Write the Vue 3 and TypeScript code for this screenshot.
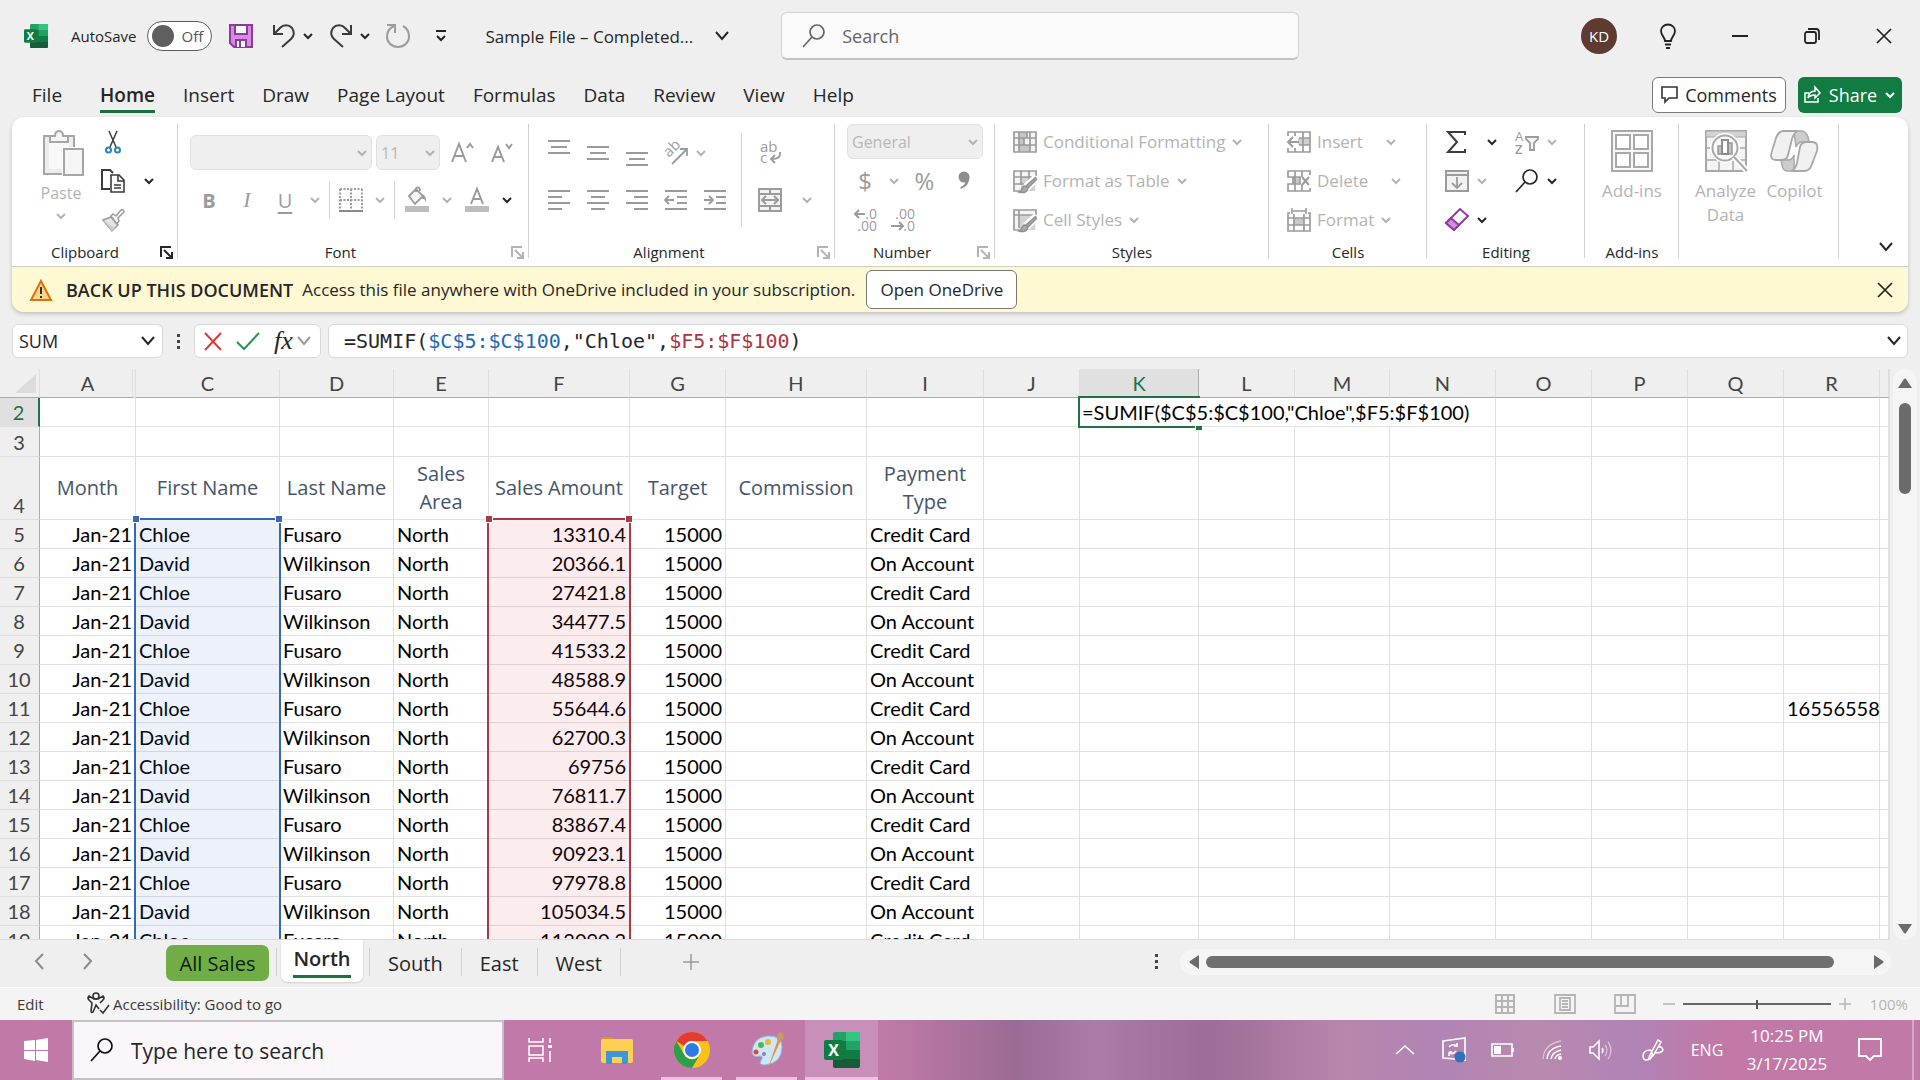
<script setup lang="ts">
import { h, ref } from 'vue'

const G = 'fill="none" stroke="#9b9b9b" stroke-width="2"'
const D = 'fill="none" stroke="#3b3b3b" stroke-width="2"'
const excel =
  '<rect x="9" y="0" width="27" height="36" rx="2" fill="#21a366"/><path d="M22 0h12a2 2 0 0 1 2 2v7H22z" fill="#33c481"/><path d="M9 18h27v16a2 2 0 0 1-2 2H11a2 2 0 0 1-2-2z" fill="#185c37"/><path d="M22 18h14v9H22zM9 9h13v18H9z" fill="#107c41"/><rect x="0" y="8" width="19" height="20" rx="2" fill="#107c41"/><text x="9.500" y="24" font-family="Open Sans, sans-serif" font-weight="700" font-size="16" fill="#fff" text-anchor="middle">X</text>'

const icons: Record<string, string> = {
  excel: '<g transform="scale(.667)">' + excel + '</g>',
  excelBig: excel,
  save: '<path d="M1 1h22v22H5l-4-4z" fill="#d48be0" stroke="#8d3a9b" stroke-width="2"/><path d="M6 1h12v9H6zM7 23v-7h10v7" fill="#fff" stroke="#8d3a9b" stroke-width="2"/><path d="M11 17v6" stroke="#8d3a9b" stroke-width="2"/>',
  undo: `<path d="M2 1v9h9M2 10l6-6a8 8 0 0 1 12 0q4 6-1 11l-9 8" ${D}/>`,
  redo: `<path d="M22 1v9h-9M22 10l-6-6a8 8 0 0 0-12 0q-4 6 1 11l9 8" ${D}/>`,
  repeat: '<path d="M1 1h8v8M8 2Q1 5 1 13a11 10 0 0 0 22 0q0-8-6-11" fill="none" stroke="#9b9b9b" stroke-width="2"/>',
  qat: '<path d="M1 1h10M2 6l4 4 4-4" fill="none" stroke="#222" stroke-width="2"/>',
  chev: '<path d="M2 1l4 4 4-4" fill="none" stroke="currentColor" stroke-width="2"/>',
  bigchev: '<path d="M1 1l6 7 6-7" fill="none" stroke="currentColor" stroke-width="2"/>',
  upchev: '<path d="M1 9l9-8 9 8" fill="none" stroke="#fff" stroke-width="1.600"/>',
  search: '<circle cx="15" cy="8" r="7" fill="none" stroke="currentColor" stroke-width="1.700"/><path d="M10 13L1 23" stroke="currentColor" stroke-width="1.700"/>',
  bulb: '<path d="M6 17c0-4-4-5-4-10a7 6.500 0 0 1 14 0c0 5-4 6-4 10zM6 20.500h6" fill="none" stroke="#222" stroke-width="1.800"/><path d="M7 24h4" stroke="#222" stroke-width="2"/>',
  min: '<path d="M0 8h16" stroke="#222" stroke-width="2"/>',
  restore: '<rect x="1" y="4" width="11" height="11" rx="2" fill="none" stroke="#222" stroke-width="1.800"/><path d="M4 1h8q3 0 3 3v8" fill="none" stroke="#222" stroke-width="1.800"/>',
  close: '<path d="M1 1l14 14M15 1L1 15" stroke="#222" stroke-width="1.700"/>',
  comment: '<path d="M1 1h15v11H8l-4 4v-4H1z" fill="none" stroke="#333" stroke-width="1.600"/>',
  share: '<path d="M5 7H1v9h13v-4M4 12q1-7 7-7V1l5 6-5 5V9q-5 0-7 3z" fill="none" stroke="#fff" stroke-width="1.500"/>',
  paste: '<g transform="translate(6 0)"><path d="M1 6h30v38H1z" fill="#ececec" stroke="#a6a6a6" stroke-width="2"/><path d="M6 11h20v28H6z" fill="#f8f8f8"/><path d="M7 12V6h5q0-5 4-5t4 5h5v6z" fill="#f5f5f5" stroke="#a6a6a6" stroke-width="2"/><path d="M19 17h23v29H19z" fill="#fff"/><path d="M21 19h19v26H21z" fill="#f5f5f5" stroke="#a6a6a6" stroke-width="2"/></g>',
  cut: '<path d="M8 1l7 16M16 1L9 17" fill="none" stroke="#3b3b3b" stroke-width="1.500"/><circle cx="7.500" cy="20" r="2.500" fill="none" stroke="#2b83c3" stroke-width="2"/><circle cx="16.500" cy="20" r="2.500" fill="none" stroke="#2b83c3" stroke-width="2"/>',
  copy: `<path d="M9 20H1V1h8l3 3" ${D}/><path d="M10 6h8l5 5v12H10zM17 6v6h6M13 16h7M13 19h7" fill="#fff" stroke="#3b3b3b" stroke-width="1.600"/>`,
  painter: '<path d="M2 12l8-3 7 8-6 6z" fill="#e4e4e4" stroke="#9b9b9b" stroke-width="1.500"/><path d="M2 12l9 11 3-3z" fill="#cfcfcf"/><path d="M10 8l2-2 3 2 5-6q3-1 3 2l-6 6 1 3-2 3z" fill="#fff" stroke="#9b9b9b" stroke-width="1.500"/>',
  launch: '<path d="M11 1H1v10" fill="none" stroke="currentColor" stroke-width="2"/><path d="M4 4l7 7M12 6v6H6" fill="none" stroke="currentColor" stroke-width="2"/>',
  growA: `<path d="M1 21L8 3l7 18M4 15h9" ${G}/><path d="M16 7l3-4 3 4" ${G}/>`,
  shrinkA: `<path d="M3 21L9 6l6 15M5 16h8" ${G}/><path d="M17 3l3 4 3-4" ${G}/>`,
  borders: `<path d="M1 1h22M1 12h22M1 1v21M12 1v21M23 1v21" fill="none" stroke="#9b9b9b" stroke-width="2" stroke-dasharray="2 1.500"/><path d="M0 23h24" stroke="#8a8a8a" stroke-width="2"/>`,
  fill: '<path d="M4 9l7-7 7 7-8 8zM11 5V1q4-2 4 3" fill="#f5f5f5" stroke="#9b9b9b" stroke-width="1.800"/><path d="M17 7q5 2 4 9-1-5-4-4z" fill="#9b9b9b"/><path d="M0 19h24v6H0z" fill="#bdbdbd"/>',
  fontA: `<path d="M6 17l6-15 6 15M8 12h8" ${G}/><path d="M0 19h24v6H0z" fill="#bdbdbd"/>`,
  top: `<path d="M1 5h22M4 11h16M1 17h22" ${G}/>`,
  middle: `<path d="M1 6h22M4 12h16M1 18h22" ${G}/>`,
  bottom: `<path d="M1 7h22M4 13h16M1 19h22" ${G}/>`,
  orient: `<text x="0" y="0" transform="translate(6 17) rotate(-45)" font-family="Open Sans, sans-serif" font-size="15" fill="#9b9b9b">ab</text><path d="M9 23L23 9M17 8h7v7" fill="none" stroke="#9b9b9b" stroke-width="1.800"/>`,
  left: `<path d="M1 3h22M1 9h14M1 15h22M1 21h14" ${G}/>`,
  center: `<path d="M1 3h22M5 9h14M1 15h22M5 21h14" ${G}/>`,
  right: `<path d="M1 3h22M9 9h14M1 15h22M9 21h14" ${G}/>`,
  outdent: `<path d="M1 3h22M13 9h10M13 15h10M1 21h22M10 12H2M5 8l-4 4 4 4" ${G}/>`,
  indent: `<path d="M1 3h22M13 9h10M13 15h10M1 21h22M1 12h8M6 8l4 4-4 4" ${G}/>`,
  wrap: `<text x="2" y="11" font-family="Open Sans, sans-serif" font-size="15" fill="#9b9b9b">ab</text><text x="2" y="22" font-family="Open Sans, sans-serif" font-size="15" fill="#9b9b9b">c</text><path d="M22 11v2q0 5-8 5M17 14l-4 4 4 4" fill="none" stroke="#9b9b9b" stroke-width="1.800"/>`,
  merge: `<path d="M1 1h22v22H1zM1 6h22M1 18h22M12 1v5M12 18v5" fill="#f3f3f3" stroke="#9b9b9b" stroke-width="2"/><path d="M5 12h14M8 8l-4 4 4 4M16 8l4 4-4 4" ${G}/>`,
  comma: '<circle cx="7" cy="6" r="5.500" fill="#8e8e8e"/><path d="M12.500 6q0 9-9 12v-2q5-2 5-6z" fill="#8e8e8e"/>',
  decInc: `<text x="24" y="11" text-anchor="end" font-family="Open Sans, sans-serif" font-size="14" fill="#9b9b9b">.0</text><text x="24" y="23" text-anchor="end" font-family="Open Sans, sans-serif" font-size="14" fill="#9b9b9b">.00</text><path d="M12 6H2M6 2L2 6l4 4" ${G}/>`,
  decDec: `<text x="24" y="11" text-anchor="end" font-family="Open Sans, sans-serif" font-size="14" fill="#9b9b9b">.00</text><text x="24" y="23" text-anchor="end" font-family="Open Sans, sans-serif" font-size="14" fill="#9b9b9b">.0</text><path d="M0 18h12M8 14l4 4-4 4" ${G}/>`,
  cond: `<path d="M1 2h22v20H1z" fill="#f4f4f4"/><path d="M6 2h8v6H6zM6 8h5v7H6zM6 15h11v7H6z" fill="#c6c6c6"/><path d="M1 2h22v20H1zM6 2v20M1 8h22M1 15h22M14 2v6M11 8v7M17 2v20" fill="none" stroke="#9b9b9b" stroke-width="1.700"/>`,
  fmtTable: `<path d="M1 2h22v20H1z" fill="#f4f4f4"/><path d="M8 8h14v14H8z" fill="#d2d2d2"/><path d="M23 7V2H1v20h6M8 2v14M16 2v10M1 8h18M1 15h11" fill="none" stroke="#9b9b9b" stroke-width="1.700"/><path d="M23 7L12 17M24 10L14 20" stroke="#fff" stroke-width="5"/><path d="M23 8L13 17l2 2L24 10M13 17q-4 0-5 5l-2 1q8 2 9-4" fill="#aaa" stroke="#8f8f8f" stroke-width="1.500"/>`,
  cellStyle: `<path d="M1 2h22v20H1z" fill="#f4f4f4"/><path d="M6 7h16v15H6z" fill="#d2d2d2"/><path d="M23 7V2H1v20h5M6 2v18M1 7h20" fill="none" stroke="#9b9b9b" stroke-width="1.700"/><path d="M23 7L12 17M24 10L14 20" stroke="#fff" stroke-width="5"/><path d="M23 8L13 17l2 2L24 10M13 17q-4 0-5 5l-2 1q8 2 9-4" fill="#aaa" stroke="#8f8f8f" stroke-width="1.500"/>`,
  insert: `<path d="M11 8h12v7H11z" fill="#d0d0d0"/><path d="M1 6V2h22v20H1v-4M1 19v3M8 2v4M16 2v20M8 18v4M12 8h11M12 15h11" fill="none" stroke="#9b9b9b" stroke-width="1.700"/><path d="M12 12H2M6 7l-5 5 5 5" ${G}/>`,
  delete: `<path d="M6 8h7v7H6z" fill="#c8c8c8"/><path d="M23 6V2H1v6h12v7H1v7h22v-3M8 2v20M15 2v6M15 15v7M6 8v7" fill="none" stroke="#9b9b9b" stroke-width="1.700"/><path d="M15 8l7 8M22 8l-7 8" ${G}/>`,
  format: `<path d="M7 10h10v7H7z" fill="#c8c8c8"/><path d="M3 5H1v18h22V5h-2M7 6v17M17 6v17M1 10h22M1 17h22" fill="none" stroke="#9b9b9b" stroke-width="1.700"/><path d="M5 3h14M5 0v6M19 0v6" fill="none" stroke="#9b9b9b" stroke-width="1.500"/>`,
  sum: `<path d="M20 5V2H3l9 10-9 10h17v-3" ${D}/>`,
  fillDown: '<path d="M1 2h22v20H1zM1 6h22" fill="#f2f2f2" stroke="#9b9b9b" stroke-width="2"/><path d="M12 8v11M7 14l5 5 5-5" fill="none" stroke="#9b9b9b" stroke-width="1.800"/>',
  clear: '<path d="M1 15L15 1l8 7L9 22z" fill="#fff" stroke="#8d3a9b" stroke-width="2"/><path d="M1 15l5-5 8 7-5 5z" fill="#d48be0" stroke="#8d3a9b" stroke-width="2"/>',
  sort: `<text x="0" y="11" font-family="Open Sans, sans-serif" font-size="13" fill="#9b9b9b">A</text><text x="0" y="24" font-family="Open Sans, sans-serif" font-size="13" font-weight="600" fill="#9b9b9b">Z</text><path d="M11 7h12v2l-4 4v7h-4v-7l-4-4z" fill="#f4f4f4" stroke="#9b9b9b" stroke-width="1.800"/>`,
  addins: '<path d="M1 1h40v40H1z" fill="#f8f8f8" stroke="#a8a8a8" stroke-width="2"/><path d="M5 5h14v14H5zM23 5h14v14H23zM5 23h14v14H5zM23 23h14v14H23z" fill="#fff" stroke="#a8a8a8" stroke-width="2"/>',
  analyze: '<path d="M1 1h40v40H1z" fill="#f4f4f4" stroke="#a8a8a8" stroke-width="2"/><path d="M1 1h40v6H1z" fill="#d2d2d2" stroke="#a8a8a8"/><path d="M1 18h40M1 30h40M14 30v11M28 30v11" stroke="#a8a8a8" stroke-width="1.500"/><circle cx="20" cy="18" r="15" fill="#fff"/><circle cx="20" cy="18" r="12.500" fill="#fafafa" stroke="#a8a8a8" stroke-width="2"/><path d="M29 27l13 14" stroke="#fff" stroke-width="6"/><path d="M29 27l13 14" stroke="#a8a8a8" stroke-width="2"/><path d="M13 16h4v8h-4zM23 13h4v11h-4z" fill="#c4c4c4" stroke="#999" stroke-width="1.500"/><path d="M17 10h6v14h-6z" fill="#fff" stroke="#8d8d8d" stroke-width="2"/>',
  copilot: '<path d="M24 1h7q5 0 7 6l1 5h-7q-4 0-6 5z" fill="#cdcdcd" stroke="#a8a8a8" stroke-width="1.500"/><path d="M24 41h-7q-4 0-5-6l-1-5h7q4 0 6-5z" fill="#cdcdcd" stroke="#a8a8a8" stroke-width="1.500"/><path d="M14 1h14q-4 1-6 8l-4 16q-1 5-7 5H6q-7 0-4-9L6 8q2-7 8-7z" fill="#f1f1f1" stroke="#a8a8a8" stroke-width="1.800"/><path d="M34 41H21q4-1 6-8l3-16q1-5 7-5h5q7 0 5 9l-5 13q-2 7-8 7z" fill="#f1f1f1" stroke="#a8a8a8" stroke-width="1.800"/>',
  warn: '<path d="M11 2l10 19H1z" fill="#fbd58b" stroke="#d9730f" stroke-width="2"/><path d="M11 8v7M11 17v2" stroke="#333" stroke-width="2"/>',
  cancel: '<path d="M1 1l16 17M17 1L1 18" stroke="#d83b3b" stroke-width="2"/>',
  check: '<path d="M1 11l7 7L23 2" fill="none" stroke="#2f9150" stroke-width="2"/>',
  dots: '<path d="M0 0h3v3H0zM0 6h3v3H0zM0 12h3v3H0z" fill="#444"/>',
  corner: '<path d="M21 0v19H0z" fill="#dcdcdc"/>',
  prev: '<path d="M8 1L1 8l7 8" fill="none" stroke="#8c8c8c" stroke-width="2"/>',
  next: '<path d="M1 1l7 7-7 8" fill="none" stroke="#8c8c8c" stroke-width="2"/>',
  plus: '<path d="M8 0v16M0 8h16" stroke="#9a9a9a" stroke-width="1.500"/>',
  plusSm: '<path d="M6 0v12M0 6h12" stroke="#b5b5b5" stroke-width="1.500"/>',
  minusSm: '<path d="M0 6h12" stroke="#b5b5b5" stroke-width="1.500"/>',
  triL: '<path d="M10 0v14L1 8q-1-1 0-2z" fill="#6b6b6b"/>',
  triR: '<path d="M0 0v14l9-6q1-1 0-2z" fill="#6b6b6b"/>',
  triU: '<path d="M0 10h14L8 1Q7 0 6 1z" fill="#6b6b6b"/>',
  triD: '<path d="M0 0h14L8 9q-1 1-2 0z" fill="#6b6b6b"/>',
  access: '<circle cx="9" cy="4" r="3" fill="none" stroke="#333" stroke-width="1.600"/><path d="M12 17l-3-4-3 7q-2 1-2-1l1-8-3-3q-2-2 0-4l5 3h4l5-3q2 2 0 4l-3 3M13 18l3 3 6-8" fill="none" stroke="#333" stroke-width="1.600"/>',
  viewNormal: '<path d="M1 1h18v18H1zM7 1v18M13 1v18M1 7h18M1 13h18" fill="none" stroke="#b5b5b5" stroke-width="2"/>',
  viewPage: '<path d="M1 1h20v18H1zM6 4h10v12H6zM8 7h6M8 10h6M8 13h6" fill="none" stroke="#b5b5b5" stroke-width="1.800"/>',
  viewBreak: '<path d="M1 1h20v18H1zM1 12h13V1M7 1v11" fill="none" stroke="#b5b5b5" stroke-width="1.800"/>',
  windows: '<path d="M0 3l11-1v10H0zM12 2l12-2v12H12zM0 13h11v10L0 21zM12 13h12v11l-12-2z" fill="#fff"/>',
  taskview: '<path d="M1 0v4h14V0M1 8h14v9H1zM1 24v-4h14v4M22 0v5M22 13v11" fill="none" stroke="#fff" stroke-width="1.500"/><path d="M20 7h4v3h-4z" fill="#fff"/>',
  folder: '<path d="M0 4q0-3 3-3h8l4 4H0z" fill="#d99a1c"/><path d="M0 5q0-2 2-2h28q2 0 2 2v20q0 2-2 2H2q-2 0-2-2z" fill="#fccf55"/><path d="M5 15h22v11q0 2-2 2h-4v-7H11v7H7q-2 0-2-2z" fill="#3a97d8"/>',
  chrome: '<circle cx="18" cy="18" r="18" fill="#fbc116"/><path d="M2.400 9A18 18 0 0 1 33.600 9H18a9 9 0 0 0-8 5z" fill="#e33b2e"/><path d="M2.400 9A18 18 0 0 0 18 36l8-13.500a9 9 0 0 1-15.800 0z" fill="#2b9f49"/><circle cx="18" cy="18" r="9" fill="#fff"/><circle cx="18" cy="18" r="7" fill="#2f7be5"/>',
  paint: '<path d="M3 20Q4 6 18 4q15-1 15 11 0 16-17 18-8 0-3-6 1-3-2-3-7 2-8-4z" fill="#cfe6f7" stroke="#8fb9da"/><circle cx="7" cy="20" r="2.500" fill="#dd4a3c"/><circle cx="12" cy="13" r="3" fill="#4fb84b"/><circle cx="19" cy="10" r="3" fill="#f2b632"/><circle cx="15" cy="22" r="2" fill="#8a7fb8"/><path d="M19 36l10-29 3 1z" fill="#e8913a"/><path d="M28 8q-1-6 3-8 5 1 3 7l-2 3z" fill="#c79a6b"/>',
  sync: '<path d="M1 4l22-3v22l-9-1L1 21z" fill="none" stroke="#fff" stroke-width="1.600"/><path d="M7 10q2-3 6-2l2 1V6M15 9h-3M14 14q-3 4-7 2v3M7 15h3" fill="none" stroke="#fff" stroke-width="1.500"/><circle cx="18" cy="20" r="5.500" fill="#2f72b8"/>',
  battery: '<path d="M1 1h20v12H1z" fill="none" stroke="#fff" stroke-width="1.600"/><path d="M3 3h7v8H3zM21 5h2v4h-2z" fill="#fff"/>',
  wifi: '<path d="M1 21Q2 6 19 3" fill="none" stroke="#e2bcd8" stroke-width="1.300"/><path d="M5 21Q6 10 19 8M9 21q1-7 10-9M13 21q1-4 6-5" fill="none" stroke="#fff" stroke-width="1.400"/><circle cx="18" cy="20" r="2" fill="#fff"/>',
  sound: '<path d="M1 8h3l6-6v18l-6-6H1z" fill="none" stroke="#fff" stroke-width="1.500"/><path d="M13 9q2 2 0 5" fill="none" stroke="#fff" stroke-width="1.500"/><path d="M16 6q4 5 0 11M19 3q6 8 0 17" fill="none" stroke="#e2bcd8" stroke-width="1.300"/>',
  pen: '<path d="M8 16L16 1l3 2-8 14-4 2zM9 11q-8 0-8 6t7 3q4-3 1-9M13 14q7 0 8-3-1-4-5-3" fill="none" stroke="#fff" stroke-width="1.500"/>',
  notify: '<path d="M1 1h22v17h-7l-4 4-4-4H1z" fill="none" stroke="#fff" stroke-width="1.800"/>',
}

interface IconProps { n: string; w?: number; h?: number }
const Icon = (p: IconProps) =>
  h('svg', {
    width: p.w ?? 24,
    height: p.h ?? 24,
    viewBox: `0 0 ${p.w ?? 24} ${p.h ?? 24}`,
    'aria-hidden': 'true',
    innerHTML: icons[p.n],
  })

const menu = ['File', 'Home', 'Insert', 'Draw', 'Page Layout', 'Formulas', 'Data', 'Review', 'View', 'Help']
const autosave = ref(false)
const query = ref('')
const zoomLevel = ref(50)
const nameBox = ref('SUM')

const columns = [
  { id: 'A', w: 96 }, { id: 'C', w: 144 }, { id: 'D', w: 114 }, { id: 'E', w: 95 }, { id: 'F', w: 141 },
  { id: 'G', w: 96 }, { id: 'H', w: 141 }, { id: 'I', w: 117 }, { id: 'J', w: 96 }, { id: 'K', w: 119 },
  { id: 'L', w: 96 }, { id: 'M', w: 95 }, { id: 'N', w: 106 }, { id: 'O', w: 96 }, { id: 'P', w: 96 },
  { id: 'Q', w: 96 }, { id: 'R', w: 96 },
]
const headings: Record<string, string> = {
  A: 'Month', C: 'First Name', D: 'Last Name', E: 'Sales Area', F: 'Sales Amount', G: 'Target', H: 'Commission', I: 'Payment Type',
}
const rightAligned = ['A', 'F', 'G', 'R']
const formula = '=SUMIF($C$5:$C$100,"Chloe",$F5:$F$100)'

interface Row { n: number; cells: Record<string, string> }
const rows: Row[] = [
  { n: 2, cells: {} },
  { n: 3, cells: {} },
  { n: 4, cells: headings },
]
for (let i = 0; i < 15; i++) {
  const odd = i % 2 === 1
  const cells: Record<string, string> = {
    A: 'Jan-21',
    C: odd ? 'David' : 'Chloe',
    D: odd ? 'Wilkinson' : 'Fusaro',
    E: 'North',
    F: String(Math.round((13310.4 + 7055.7 * i) * 10) / 10),
    G: '15000',
    I: odd ? 'On Account' : 'Credit Card',
  }
  if (i === 6) cells.R = '16556558'
  rows.push({ n: 5 + i, cells })
}
const styleItems = [
  { icon: 'cond', label: 'Conditional Formatting' },
  { icon: 'fmtTable', label: 'Format as Table' },
  { icon: 'cellStyle', label: 'Cell Styles' },
]
const cellItems = [
  { icon: 'insert', label: 'Insert', far: true },
  { icon: 'delete', label: 'Delete', far: true },
  { icon: 'format', label: 'Format', far: false },
]
</script>

<template>
  <div class="app">
    <header class="title">
      <Icon n="excel" class="logo" />
      <label class="autosave">AutoSave
        <input v-model="autosave" type="checkbox" role="switch">
        <span class="switch"><i></i>Off</span>
      </label>
      <button class="tb save" aria-label="Save"><Icon n="save" /></button>
      <button class="tb hist" aria-label="Undo"><Icon n="undo" /></button>
      <button class="tb drop" aria-label="Undo list"><Icon n="chev" :w="12" :h="6" /></button>
      <button class="tb hist" aria-label="Redo"><Icon n="redo" /></button>
      <button class="tb drop" aria-label="Redo list"><Icon n="chev" :w="12" :h="6" /></button>
      <button class="tb hist" aria-label="Repeat"><Icon n="repeat" /></button>
      <button class="tb qat" aria-label="Customize toolbar"><Icon n="qat" :w="12" :h="12" /></button>
      <button class="tb filename">Sample File – Completed... <Icon n="bigchev" :w="14" :h="10" /></button>
      <label class="search"><Icon n="search" /><input v-model="query" type="search" placeholder="Search" aria-label="Search"></label>
      <div class="winctl">
        <button class="avatar">KD</button>
        <button class="wc" aria-label="Ideas"><Icon n="bulb" :w="18" :h="25" /></button>
        <button class="wc" aria-label="Minimize"><Icon n="min" :w="16" :h="16" /></button>
        <button class="wc" aria-label="Restore"><Icon n="restore" :w="16" :h="16" /></button>
        <button class="wc" aria-label="Close"><Icon n="close" :w="16" :h="16" /></button>
      </div>
    </header>

    <nav class="menu">
      <a v-for="m in menu" :key="m" href="#" :class="{ on: m === 'Home', file: m === 'File' }">{{ m }}</a>
      <span class="grow"></span>
      <button class="comments"><Icon n="comment" :w="17" :h="17" />Comments</button>
      <button class="share"><Icon n="share" :w="18" :h="18" />Share<Icon n="chev" :w="12" :h="6" /></button>
    </nav>

    <div class="card">
      <section class="ribbon">
        <div class="group clip">
          <div class="body row">
            <button class="big paste"><Icon n="paste" :w="48" :h="47" /><span>Paste</span><Icon n="chev" :w="12" :h="6" /></button>
            <div class="stack">
              <div class="line"><button class="w36 dark" aria-label="Cut"><Icon n="cut" /></button></div>
              <div class="line"><button class="w36 dark" aria-label="Copy"><Icon n="copy" /></button><button class="w36 dark" aria-label="Copy options"><Icon n="chev" :w="12" :h="6" /></button></div>
              <div class="line"><button class="w36" aria-label="Format Painter"><Icon n="painter" /></button></div>
            </div>
          </div>
          <div class="caption">Clipboard<button class="launch dark" aria-label="Clipboard settings"><Icon n="launch" :w="12" :h="12" /></button></div>
        </div>

        <div class="group font">
          <div class="body">
            <div class="fontrow">
              <span class="combo wide"><select disabled aria-label="Font name"><option></option></select><Icon n="chev" :w="12" :h="6" /></span>
              <span class="combo size"><select disabled aria-label="Font size"><option>11</option></select><Icon n="chev" :w="12" :h="6" /></span>
              <button class="w38" aria-label="Increase font size"><Icon n="growA" /></button>
              <button class="w38" aria-label="Decrease font size"><Icon n="shrinkA" /></button>
            </div>
            <div class="fontrow second">
              <button class="w38 glyph bold">B</button>
              <button class="w38 glyph ital">I</button>
              <button class="w38 glyph under">U</button>
              <button class="w22" aria-label="Underline styles"><Icon n="chev" :w="12" :h="6" /></button>
              <i class="vr"></i>
              <button class="w36" aria-label="Borders"><Icon n="borders" /></button>
              <button class="w22" aria-label="Border styles"><Icon n="chev" :w="12" :h="6" /></button>
              <i class="vr"></i>
              <button class="w38" aria-label="Fill color"><Icon n="fill" :h="26" /></button>
              <button class="w22" aria-label="Fill colors"><Icon n="chev" :w="12" :h="6" /></button>
              <button class="w38" aria-label="Font color"><Icon n="fontA" :h="26" /></button>
              <button class="w22 dark" aria-label="Font colors"><Icon n="chev" :w="12" :h="6" /></button>
            </div>
          </div>
          <div class="caption dlg">Font<button class="launch" aria-label="Font settings"><Icon n="launch" :w="12" :h="12" /></button></div>
        </div>

        <div class="group align">
          <div class="body row">
            <div class="alignleft">
              <div class="fontrow">
                <button class="w39 up" aria-label="Top align"><Icon n="top" /></button>
                <button class="w39" aria-label="Middle align"><Icon n="middle" /></button>
                <button class="w39 down" aria-label="Bottom align"><Icon n="bottom" /></button>
                <button class="w39" aria-label="Orientation"><Icon n="orient" :w="26" /></button>
                <button class="w12" aria-label="Orientation options"><Icon n="chev" :w="12" :h="6" /></button>
              </div>
              <div class="fontrow second">
                <button v-for="a in ['left', 'center', 'right', 'outdent', 'indent']" :key="a" class="w39" :aria-label="a"><Icon :n="a" /></button>
              </div>
            </div>
            <i class="vr tall"></i>
            <div class="alignright">
              <div class="fontrow"><button class="w39" aria-label="Wrap text"><Icon n="wrap" /></button></div>
              <div class="fontrow second"><button class="w39" aria-label="Merge"><Icon n="merge" /></button><button class="w36" aria-label="Merge options"><Icon n="chev" :w="12" :h="6" /></button></div>
            </div>
          </div>
          <div class="caption dlg">Alignment<button class="launch" aria-label="Alignment settings"><Icon n="launch" :w="12" :h="12" /></button></div>
        </div>

        <div class="group number">
          <div class="body stack">
            <div class="line"><span class="combo gen"><select disabled aria-label="Number format"><option>General</option></select><Icon n="chev" :w="12" :h="6" /></span></div>
            <div class="line"><button class="w36 sym">$</button><button class="w22" aria-label="Currency list"><Icon n="chev" :w="12" :h="6" /></button><button class="w39 sym">%</button><button class="w39" aria-label="Comma style"><Icon n="comma" :w="14" :h="20" /></button></div>
            <div class="line"><button class="w36" aria-label="Increase decimal"><Icon n="decInc" /></button><button class="w39" aria-label="Decrease decimal"><Icon n="decDec" /></button></div>
          </div>
          <div class="caption dlg">Number<button class="launch" aria-label="Number settings"><Icon n="launch" :w="12" :h="12" /></button></div>
        </div>

        <div class="group styles">
          <div class="body stack">
            <div v-for="s in styleItems" :key="s.label" class="line"><button class="item"><Icon :n="s.icon" />{{ s.label }}<Icon n="chev" :w="12" :h="6" /></button></div>
          </div>
          <div class="caption">Styles</div>
        </div>

        <div class="group cells">
          <div class="body stack">
            <div v-for="s in cellItems" :key="s.label" class="line"><button class="item" :class="{ far: s.far }"><Icon :n="s.icon" />{{ s.label }}<Icon n="chev" :w="12" :h="6" /></button></div>
          </div>
          <div class="caption">Cells</div>
        </div>

        <div class="group editing">
          <div class="body row">
            <div class="stack">
              <div class="line"><button class="w24" aria-label="AutoSum"><Icon n="sum" /></button><button class="w45 dark" aria-label="AutoSum options"><Icon n="chev" :w="12" :h="6" /></button></div>
              <div class="line"><button class="w24" aria-label="Fill"><Icon n="fillDown" /></button><button class="w26" aria-label="Fill options"><Icon n="chev" :w="12" :h="6" /></button></div>
              <div class="line"><button class="w24" aria-label="Clear"><Icon n="clear" /></button><button class="w26 dark" aria-label="Clear options"><Icon n="chev" :w="12" :h="6" /></button></div>
            </div>
            <div class="stack">
              <div class="line"><button class="w24" aria-label="Sort and filter"><Icon n="sort" /></button><button class="w26" aria-label="Sort options"><Icon n="chev" :w="12" :h="6" /></button></div>
              <div class="line"><button class="w24 dark" aria-label="Find"><Icon n="search" /></button><button class="w26 dark" aria-label="Find options"><Icon n="chev" :w="12" :h="6" /></button></div>
            </div>
          </div>
          <div class="caption">Editing</div>
        </div>

        <div class="group addins">
          <div class="body row"><button class="big tile"><Icon n="addins" :w="42" :h="42" /><span>Add-ins</span></button></div>
          <div class="caption">Add-ins</div>
        </div>

        <div class="group ai">
          <div class="body row">
            <button class="big tile"><Icon n="analyze" :w="42" :h="42" /><span>Analyze<br>Data</span></button>
            <button class="big tile"><Icon n="copilot" :w="49" :h="42" /><span>Copilot</span></button>
          </div>
        </div>
        <button class="collapse" aria-label="Collapse ribbon"><Icon n="bigchev" :w="14" :h="10" /></button>
      </section>

      <section class="notice">
        <Icon n="warn" :w="22" :h="22" />
        <strong>BACK UP THIS DOCUMENT</strong>
        <span>Access this file anywhere with OneDrive included in your subscription.</span>
        <button class="open">Open OneDrive</button>
        <span class="grow"></span>
        <button class="dismiss" aria-label="Dismiss"><Icon n="close" :w="16" :h="16" /></button>
      </section>
    </div>

    <div class="fbar">
      <span class="namebox"><input v-model="nameBox" aria-label="Name box"><Icon n="bigchev" :w="14" :h="10" /></span>
      <Icon n="dots" :w="3" :h="15" class="handle" />
      <span class="fx">
        <button aria-label="Cancel"><Icon n="cancel" :w="18" :h="19" /></button>
        <button aria-label="Enter"><Icon n="check" :w="24" :h="20" /></button>
        <button class="fxb">fx</button>
        <button class="pale" aria-label="Functions"><Icon n="bigchev" :w="14" :h="10" /></button>
      </span>
      <div class="formula" role="textbox" aria-label="Formula bar"><span>=SUMIF(<b class="r1">$C$5:$C$100</b>,"Chloe",<b class="r2">$F5:$F$100</b>)</span><Icon n="bigchev" :w="14" :h="10" /></div>
    </div>

    <main class="sheet">
      <div class="grid">
        <table>
          <colgroup><col class="rowcol"><col v-for="c in columns" :key="c.id" :style="{ width: c.w + 'px' }"><col></colgroup>
          <thead>
            <tr>
              <th class="corner"><Icon n="corner" :w="21" :h="19" /></th>
              <th v-for="c in columns" :key="c.id" :class="{ sel: c.id === 'K', hiddenNext: c.id === 'A' }">{{ c.id }}</th>
              <th></th>
            </tr>
          </thead>
          <tbody>
            <tr v-for="r in rows" :key="r.n" :class="'r' + r.n">
              <th scope="row" :class="{ sel: r.n === 2 }">{{ r.n }}</th>
              <td v-for="c in columns" :key="c.id" :class="{ num: rightAligned.includes(c.id), head: r.n === 4 }">{{ r.cells[c.id] }}<div v-if="r.n === 5 && c.id === 'C'" class="range blue"><i></i><i></i></div><div v-if="r.n === 5 && c.id === 'F'" class="range red"><i></i><i></i></div><div v-if="r.n === 2 && c.id === 'K'" class="active"><span>{{ formula }}</span></div></td>
              <td></td>
            </tr>
          </tbody>
        </table>
      </div>
      <div class="vscroll"><Icon n="triU" :w="14" :h="10" /><i></i><Icon n="triD" :w="14" :h="10" /></div>
    </main>

    <div class="tabs">
      <button class="nav" aria-label="Previous sheet"><Icon n="prev" :w="9" :h="17" /></button>
      <button class="nav" aria-label="Next sheet"><Icon n="next" :w="9" :h="17" /></button>
      <button class="tab all">All Sales</button><i class="sep first"></i>
      <button class="tab north"><span>North</span></button><i class="sep"></i>
      <button class="tab">South</button><i class="sep"></i>
      <button class="tab">East</button><i class="sep"></i>
      <button class="tab">West</button><i class="sep"></i>
      <button class="add" aria-label="New sheet"><Icon n="plus" :w="16" :h="16" /></button>
      <span class="grow"></span>
      <Icon n="dots" :w="3" :h="15" class="tabdots" />
      <div class="hscroll"><Icon n="triL" :w="10" :h="14" /><i></i><Icon n="triR" :w="10" :h="14" /></div>
    </div>

    <footer class="status">
      <span class="mode">Edit</span>
      <Icon n="access" :h="25" /><span>Accessibility: Good to go</span>
      <span class="grow"></span>
      <button class="view" aria-label="Normal view"><Icon n="viewNormal" :w="20" :h="20" /></button>
      <button class="view" aria-label="Page layout view"><Icon n="viewPage" :w="22" :h="20" /></button>
      <button class="view" aria-label="Page break preview"><Icon n="viewBreak" :w="22" :h="20" /></button>
      <Icon n="minusSm" :w="12" :h="12" />
      <input v-model="zoomLevel" type="range" min="0" max="100" aria-label="Zoom">
      <Icon n="plusSm" :w="12" :h="12" />
      <span class="pctzoom">100%</span>
    </footer>

    <div class="taskbar">
      <button class="start" aria-label="Start"><Icon n="windows" /></button>
      <label class="wsearch"><Icon n="search" /><input type="text" placeholder="Type here to search" aria-label="Type here to search"></label>
      <button class="app-ic tv" aria-label="Task view"><Icon n="taskview" /></button>
      <button class="app-ic files" aria-label="File Explorer"><Icon n="folder" :w="32" :h="29" /></button>
      <button class="app-ic run" aria-label="Chrome"><Icon n="chrome" :w="36" :h="36" /></button>
      <button class="app-ic run" aria-label="Paint"><Icon n="paint" :w="36" :h="36" /></button>
      <button class="app-ic cur" aria-label="Excel"><Icon n="excelBig" :w="36" :h="36" /></button>
      <span class="grow"></span>
      <div class="tray">
        <button class="s52" aria-label="Hidden icons"><Icon n="upchev" :w="20" :h="10" /></button>
        <button class="s46" aria-label="Sync"><Icon n="sync" :h="26" /></button>
        <button class="s52" aria-label="Battery"><Icon n="battery" :h="14" /></button>
        <button class="s46" aria-label="Network"><Icon n="wifi" :w="20" /></button>
        <button class="s52" aria-label="Volume"><Icon n="sound" :h="22" /></button>
        <button class="s52" aria-label="Pen"><Icon n="pen" :w="22" :h="23" /></button>
        <span class="lang">ENG</span>
        <span class="clock">10:25 PM<br>3/17/2025</span>
        <button class="note" aria-label="Notifications"><Icon n="notify" :w="24" :h="24" /></button>
      </div>
    </div>
  </div>
</template>

<style>
body { margin: 0; overflow: hidden; }
</style>

<style scoped>
* { box-sizing: border-box; }
.app { display: flex; flex-direction: column; height: 100vh; background: #efefef; color: #262626; font-family: "Open Sans", "Noto Sans", sans-serif; font-size: 15px; }
button, input, select { font: inherit; color: inherit; }
button { display: flex; align-items: center; justify-content: center; padding: 0; border: 0; background: none; flex: none; }
svg { display: block; flex: none; overflow: visible; }
a { color: inherit; text-decoration: none; }
.grow { flex: 1; }

.title { display: flex; align-items: center; height: 72px; padding-left: 24px; flex: none; }
.autosave { display: flex; align-items: center; gap: 10px; margin-left: 23px; }
.autosave input { position: absolute; opacity: 0; }
.switch { display: flex; align-items: center; gap: 8px; width: 65px; height: 30px; padding: 0 4px; border: 1px solid #5c5c5c; border-radius: 15px; background: #fff; color: #555; }
.switch i { width: 22px; height: 22px; border-radius: 50%; background: #5f5f5f; }
.tb { height: 36px; }
.save { width: 24px; margin-left: 17px; margin-right: 19px; }
.hist { width: 24px; }
.drop { width: 12px; margin: 0 15px 0 6px; }
.qat { width: 12px; margin-left: 25px; }
.filename { gap: 22px; margin-left: 39px; font-size: 17px; }
.search { display: flex; align-items: center; gap: 16px; height: 48px; width: 518px; margin-left: 52px; padding-left: 20px; border: 1px solid #d2d2d2; border-bottom: 2px solid #c4c4c4; border-radius: 6px; background: #fafafa; color: #666; font-size: 18px; }
.search input { flex: 1; min-width: 0; padding: 0; border: 0; outline: 0; background: none; }
.search input::placeholder, .wsearch input::placeholder { color: inherit; opacity: 1; }
.winctl { display: flex; align-items: center; flex: 1; justify-content: flex-end; }
.avatar { width: 36px; height: 36px; border-radius: 50%; background: #5f3a30; color: #fff; font-size: 15px; margin-right: 15px; }
.wc { width: 72px; height: 48px; }

.menu { display: flex; align-items: center; gap: 28px; height: 45px; padding: 0 18px 0 32px; font-size: 19px; flex: none; }
.menu a { padding: 4px 0 0; height: 36px; line-height: 29px; border-bottom: 3px solid transparent; }
.menu a.file { padding-right: 10px; }
.menu a.on { font-weight: 600; border-color: #1a6e41; }
.comments { gap: 7px; width: 134px; height: 36px; border: 1px solid #7a7a7a; border-radius: 6px; background: #fff; margin-right: -16px; font-size: 18px; }
.share { gap: 7px; width: 104px; height: 36px; border-radius: 6px; background: #107c41; color: #fff; font-size: 18px; }

.card { margin: 0 12px; border-radius: 12px; overflow: hidden; box-shadow: 0 2px 4px #0003; flex: none; }
.ribbon { display: flex; height: 150px; background: #fff; color: #b3b3b3; border-bottom: 1px solid #cfcdbd; }
.group { display: flex; flex-direction: column; position: relative; padding: 0 0 0 12px; }
.group::after { content: ""; position: absolute; right: 0; top: 7px; bottom: 8px; width: 1px; background: #d0d0d0; }
.body { height: 122px; }
.row { display: flex; }
.stack { padding-top: 5px; }
.line { display: flex; align-items: center; height: 39px; }
.caption { display: flex; align-items: center; justify-content: center; position: relative; height: 26px; color: #262626; margin-left: -12px; }
.caption.dlg { height: 25px; padding-right: 26px; }
.launch { position: absolute; right: 6px; top: 7px; color: #b3b3b3; }
.dark, .launch.dark { color: #262626; }
.clip { width: 166px; padding-left: 18px; }
.clip .caption { height: 25px; margin: 0 14px 0 -18px; padding-right: 6px; }
.clip .launch { right: -8px; }
.big { flex-direction: column; justify-content: flex-start; font-size: 16px; line-height: 24px; }
.paste { width: 62px; padding-top: 13px; }
.paste span { margin: 4px 0 8px; }
.paste + .stack { margin-left: 3px; }
.font { width: 351px; }
.fontrow { display: flex; align-items: center; height: 35px; margin-top: 18px; }
.fontrow.second { height: 36px; margin-top: 12px; }
.combo { display: grid; align-items: center; height: 35px; border: 1px solid #e0e0e0; border-radius: 6px; background: #efefef; margin-right: 4px; font-size: 16px; }
.combo select, .combo svg { grid-area: 1 / 1; }
.combo select { appearance: none; width: 100%; height: 100%; border: 0; background: none; padding: 0 4px; color: #b8b8b8; opacity: 1; }
.combo svg { justify-self: end; margin-right: 3px; }
.wide { width: 182px; }
.size { width: 64px; }
.gen { width: 136px; }
.w12 { width: 12px; } .w22 { width: 22px; } .w24 { width: 24px; } .w26 { width: 26px; } .w36 { width: 36px; } .w38 { width: 38px; } .w39 { width: 39px; } .w45 { width: 45px; }
.glyph { font-size: 20px; color: #9b9b9b; }
.bold { font-weight: 700; }
.ital { font-family: "Liberation Serif", serif; font-style: italic; font-size: 22px; }
.under { text-decoration: underline; text-underline-offset: 4px; }
.vr { width: 1px; height: 36px; margin: 0 3px; background: #d0d0d0; }
.align { width: 306px; padding-left: 10px; }
.align .caption { margin-left: -10px; }
.alignleft { width: 202px; }
.vr.tall { height: 94px; margin: 16px 0 0; }
.alignright { padding-left: 8px; }
.up { padding-bottom: 10px; }
.down { padding-top: 10px; }
.number { width: 160px; }
.sym { font-size: 24px; color: #9b9b9b; }
.styles { width: 274px; padding-left: 18px; }
.styles .caption, .cells .caption, .editing .caption { margin-left: -18px; }
.cells { width: 158px; padding-left: 18px; }
.item { gap: 6px; font-size: 17px; }
.item.far svg:last-child { margin-left: 16px; }
.editing { width: 158px; padding-left: 18px; }
.editing .stack { width: 76px; }
.addins { width: 94px; padding: 0; }
.addins .caption, .ai .caption { margin: 0; }
.tile { width: 94px; padding-top: 13px; font-size: 17px; }
.tile span { margin-top: 7px; }
.ai { width: 160px; }
.ai .tile { width: 69px; }
.ai .body { justify-content: center; padding-right: 10px; }
.collapse { margin-left: auto; align-self: flex-end; width: 44px; height: 38px; color: #262626; }

.notice { display: flex; align-items: center; height: 45px; padding: 0 15px 0 18px; background: #fef8d3; font-size: 17px; }
.notice strong { font-size: 18px; font-weight: 600; margin: 0 9px 0 14px; }
.open { width: 151px; height: 39px; margin-left: 11px; border: 1px solid #777; border-radius: 6px; background: #fff; }

.fbar { display: flex; align-items: center; height: 34px; margin: 12px 12px 11px; flex: none; }
.fbar > span, .formula { display: flex; align-items: center; height: 34px; background: #fff; border: 1px solid #d8d8d8; border-radius: 6px; }
.namebox { width: 151px; padding: 0 7px 0 6px; font-size: 18px; }
.namebox input { flex: 1; min-width: 0; border: 0; padding: 0; outline: 0; }
.handle { margin: 0 14px; }
.fx { width: 127px; padding: 0 1px 0 9px; gap: 14px; }
.fxb { font: italic 26px/30px "Liberation Serif", serif; }
.pale { color: #999; margin-left: -10px; }
.formula { flex: 1; margin-left: 7px; padding: 0 6px 0 15px; justify-content: space-between; font: 20px "DejaVu Sans Mono", "Liberation Mono", monospace; }
.formula b { font-weight: 400; }
.r1 { color: #1a6bb5; }
.r2 { color: #b0333f; }

.sheet { display: flex; flex: 1; min-height: 0; }
.grid { flex: 1; min-width: 0; overflow: hidden; border-right: 1px solid #e0e0e0; border-bottom: 1px solid #dcdcdc; }
table { width: 100%; table-layout: fixed; border-collapse: separate; border-spacing: 0; font: 20px/28px Lato, "Open Sans", sans-serif; }
.rowcol { width: 40px; }
th { padding: 0; height: 29px; font-weight: 400; color: #444; background: #efefef; }
thead th { border-bottom: 1px solid #ababab; border-right: 1px solid #dedede; }
thead th.sel { background: #e0e0e0; color: #1e7145; border-color: #ababab; }
.hiddenNext { border-right: 4px double #dedede; padding-left: 3px; }
.corner svg { margin-left: 15px; }
tbody th { border-right: 1px solid #ababab; border-bottom: 1px solid #dedede; vertical-align: bottom; padding-right: 1px; }
tbody th.sel { background: #e0e0e0; color: #1e7145; border-right: 2px solid #1e7145; }
td { position: relative; height: 29px; padding: 0 3px; background: #fff; border-right: 1px solid #e0e0e0; border-bottom: 1px solid #e0e0e0; color: #000; white-space: nowrap; }
td.num { text-align: right; }
.r3 th, .r3 td { height: 30px; }
.r4 th, .r4 td { height: 63px; }
td.head { text-align: center; white-space: normal; color: #44546a; padding: 0 3px; font-family: "Open Sans", sans-serif; }
.range { position: absolute; z-index: 1; left: -2px; right: -2px; top: -2px; height: 440px; border: 2px solid; pointer-events: none; }
.blue { border-color: #3568b5; color: #3568b5; background: #3a6fc818; }
.red { border-color: #a83a46; color: #a83a46; background: #d23a4618; }
.range i { position: absolute; top: -4px; left: -3px; width: 6px; height: 6px; background: currentColor; outline: 1px solid #fff; }
.range i + i { left: auto; right: -3px; }
.active { position: absolute; z-index: 2; left: -2px; right: -2px; top: -2px; height: 32px; border: 2px solid #217346; }
.active::after { content: ""; position: absolute; right: -4px; bottom: -4px; width: 6px; height: 4px; background: #217346; border-left: 1px solid #fff; }
.active span { display: block; width: max-content; padding: 0 14px 0 2px; background: #fff; }
.vscroll { display: flex; flex-direction: column; align-items: center; width: 24px; margin: 0 3px; padding: 9px 0 6px; border-radius: 12px; background: #f5f5f5; }
.vscroll i { width: 12px; height: 91px; margin: 15px 0 auto; border-radius: 6px; background: #6b6b6b; }

.tabs { display: flex; align-items: center; height: 47px; padding: 0 29px 4px 15px; font-size: 20px; flex: none; }
.nav { width: 48px; height: 36px; }
.tab { height: 38px; padding: 4px 18px 0; }
.all { padding: 2px 0 0; width: 103px; height: 36px; margin: 2px 0 0 55px; border-radius: 7px; background: #70ad47; color: #0c1f05; }
.sep { width: 1px; height: 28px; background: #cfcfcf; }
.sep.first { margin: 0 4px 0 7px; }
.north { align-self: flex-start; height: 42px; width: 82px; padding: 0; margin-right: 6px; border-radius: 0 0 7px 7px; background: #fff; box-shadow: 0 1px 2px #0002; font-weight: 600; align-items: flex-start; }
.north span { line-height: 37px; height: 38px; border-bottom: 3px solid #1a7343; }
.add { width: 140px; height: 36px; }
.tabdots { margin-right: 22px; }
.hscroll { display: flex; align-items: center; justify-content: space-between; width: 711px; height: 26px; padding: 0 7px 0 9px; border-radius: 13px; background: #f5f5f5; }
.hscroll i { flex: 1; height: 12px; margin: 0 40px 0 7px; border-radius: 6px; background: #6f6f6f; }

.status { display: flex; align-items: center; height: 33px; padding: 0 12px 0 17px; border-top: 1px solid #fff; background: #f4f4f4; color: #3a3a3a; flex: none; }
.mode { width: 70px; }
.status > svg + span { margin-left: 2px; }
.view { width: 22px; margin-right: 38px; }
.view + svg { margin-left: -11px; }
.status input { appearance: none; width: 148px; height: 20px; margin: 0 8px; background: linear-gradient(#666, #666) center / 100% 2px no-repeat; }
.status input::-webkit-slider-thumb { appearance: none; width: 2px; height: 9px; background: #555; }
.status .pctzoom { margin-left: 19px; color: #b5b5b5; }

.taskbar { display: flex; height: 60px; flex: none; color: #fff; background: linear-gradient(90deg, #c179a8 0, #c07aa8 46%, #9a6b95 53%, #ab7ca8 57%, #9d6c98 63%, #b886ad 70%, #b084b4 75%, #b98aaf 80%, #b083b5 85%, #c378a6 90%, #c07aa8 100%); }
.start { width: 72px; }
.wsearch { display: flex; align-items: center; gap: 17px; width: 432px; padding-left: 16px; border: 2px solid #c6c0c8; background: #fbf6fa; color: #262626; font-size: 21px; }
.wsearch svg { color: #111; }
.wsearch input { flex: 1; min-width: 0; border: 0; padding: 2px 0 0; outline: 0; background: none; }
.app-ic { width: 75px; height: 60px; border-bottom: 3px solid transparent; padding-top: 3px; }
.app-ic.tv { width: 72px; }
.app-ic.files { width: 82px; margin-right: 3px; }
.app-ic.run { width: 61px; border-color: #f0bfe4; margin-right: 14px; }
.app-ic.run + .cur { width: 73px; margin-left: -6px; background: #c78fb9; border-color: #f0bfe4; }
.tray { display: flex; align-items: center; padding-right: 6px; }
.s46 { width: 46px; } .s52 { width: 52px; }
.lang { width: 56px; text-align: center; font-size: 16px; }
.clock { width: 104px; text-align: center; font-size: 17px; line-height: 28px; }
.note { width: 75px; height: 60px; padding-right: 11px; border-right: 2px solid #d7a6c8; }
</style>
